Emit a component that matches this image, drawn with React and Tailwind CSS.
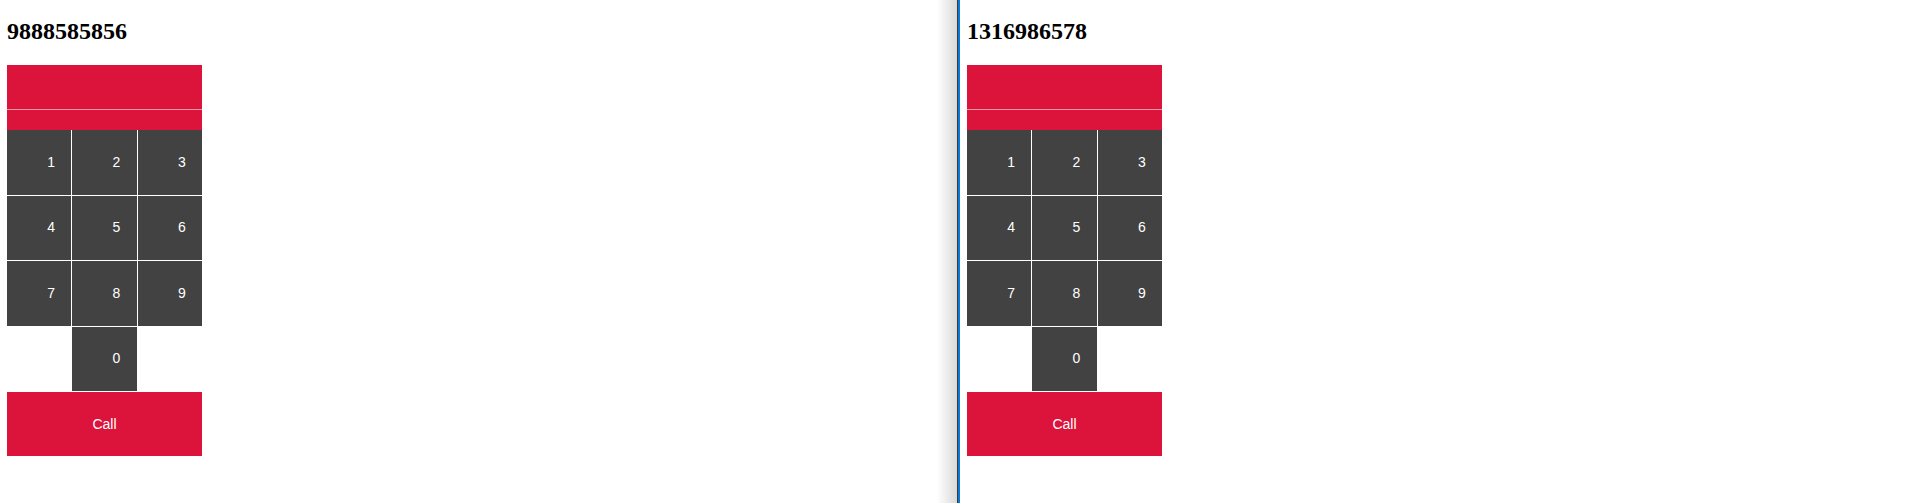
// Two side-by-side dialer panes split by a draggable-looking divider
const KEYS = ['1', '2', '3', '4', '5', '6', '7', '8', '9'];

function Dialer({ number }) {
  return (
    <div className="pt-[17px] pl-[7px]">
      <h2 className="m-0 mb-[20px] text-[24px] leading-[28px] font-bold text-black font-['Liberation_Serif','Times_New_Roman',serif]">
        {number}
      </h2>

      <div className="w-[195px] font-['Liberation_Sans',Arial,sans-serif] text-[14px] text-white">
        {/* display */}
        <div className="h-[45px] bg-[#dc143c] border-b border-[#f39aac]" />
        <div className="h-[20px] bg-[#dc143c]" />

        {/* keypad */}
        <div className="grid grid-cols-3 gap-px bg-white">
          {KEYS.map(k => (
            <button
              key={k}
              className="h-[64.5px] bg-[#424242] pl-[24px] text-center cursor-pointer"
            >
              {k}
            </button>
          ))}
          <div />
          <button className="h-[64.5px] bg-[#424242] pl-[24px] text-center cursor-pointer">0</button>
          <div />
        </div>

        <button className="mt-px w-full h-[64px] bg-[#dc143c] text-center cursor-pointer">
          Call
        </button>
      </div>
    </div>
  );
}

export default function App() {
  return (
    <div className="h-screen w-full flex bg-white overflow-hidden">
      <div className="w-[937px] shrink-0">
        <Dialer number="9888585856" />
      </div>

      {/* splitter */}
      <div className="flex shrink-0">
        <div className="w-[20px] bg-gradient-to-r from-white to-[#d9d9d9]" />
        <div className="w-px bg-[#3a3a3a]" />
        <div className="w-[2px] bg-[#0a78d7]" />
      </div>

      <div className="flex-1">
        <Dialer number="1316986578" />
      </div>
    </div>
  );
}
